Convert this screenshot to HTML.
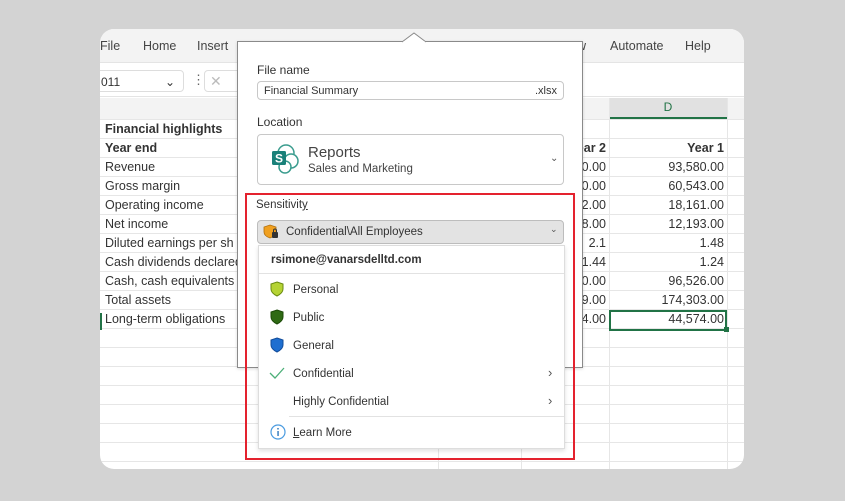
<!DOCTYPE html>
<html><head><meta charset="utf-8"><style>
*{margin:0;padding:0;box-sizing:border-box}
body{width:845px;height:501px;background:#d3d3d3;font-family:"Liberation Sans",sans-serif;position:relative;overflow:hidden;color:#333}
.a{position:absolute}
.card{left:100px;top:29px;width:644px;height:440px;background:#fff;border-radius:14px;overflow:hidden}
.rib{left:0;top:0;width:644px;height:34px;background:#f3f3f3;border-bottom:1px solid #e4e4e4;font-size:12.5px;color:#444}
.hl{height:1px;background:#e6e6e6;left:0;width:644px}
.vl{width:1px;background:#e6e6e6}
.cell{font-size:12.5px;color:#333;white-space:nowrap}
.r{text-align:right}
.b{font-weight:bold}
.t{font-size:12px;color:#333}
</style></head><body>
<div class="a card">
 <div class="a rib">
  <span class="a" style="left:0;top:10px">File</span>
  <span class="a" style="left:43px;top:10px">Home</span>
  <span class="a" style="left:97px;top:10px">Insert</span>
  <span class="a" style="left:477px;top:10px">w</span>
  <span class="a" style="left:510px;top:10px">Automate</span>
  <span class="a" style="left:585px;top:10px">Help</span>
 </div>
 <div class="a" style="left:0;top:35px;width:644px;height:33px;background:#fff;border-bottom:1px solid #e4e4e4"></div>
 <div class="a" style="left:-8px;top:41px;width:92px;height:22px;border:1px solid #ddd;border-radius:4px;font-size:12px;padding:4px 8px">011<span style="float:right">⌄</span></div>
 <span class="a" style="left:92px;top:43px;font-size:13px;color:#666">⋮</span>
 <div class="a" style="left:104px;top:41px;width:40px;height:22px;border:1px solid #ddd;border-radius:4px;color:#bbb;font-size:14px;padding:2px 5px">✕</div>
 <div class="a" style="left:0;top:69px;width:644px;height:21px;background:#f3f3f3"></div>
 <div class="a" style="left:509px;top:69px;width:118px;height:21px;background:#e1e1e1;border-bottom:2px solid #217346;text-align:center;color:#217346;font-size:12px;line-height:19px">D</div>
 <!-- grid -->
 <div class="a hl" style="top:90px"></div><div class="a hl" style="top:109px"></div><div class="a hl" style="top:128px"></div><div class="a hl" style="top:147px"></div><div class="a hl" style="top:166px"></div><div class="a hl" style="top:185px"></div><div class="a hl" style="top:204px"></div><div class="a hl" style="top:223px"></div><div class="a hl" style="top:242px"></div><div class="a hl" style="top:261px"></div><div class="a hl" style="top:280px"></div><div class="a hl" style="top:299px"></div><div class="a hl" style="top:318px"></div><div class="a hl" style="top:337px"></div><div class="a hl" style="top:356px"></div><div class="a hl" style="top:375px"></div><div class="a hl" style="top:394px"></div><div class="a hl" style="top:413px"></div><div class="a hl" style="top:432px"></div>
 <div class="a vl" style="left:338px;top:69px;height:371px"></div>
 <div class="a vl" style="left:421px;top:69px;height:371px"></div>
 <div class="a vl" style="left:509px;top:69px;height:371px"></div>
 <div class="a vl" style="left:627px;top:69px;height:371px"></div>
 <div class="a cell b" style="left:5px;top:93px">Financial highlights</div>
 <div class="a cell b" style="left:5px;top:112px">Year end</div>
 <div class="a cell" style="left:5px;top:131px">Revenue</div>
 <div class="a cell" style="left:5px;top:150px">Gross margin</div>
 <div class="a cell" style="left:5px;top:169px">Operating income</div>
 <div class="a cell" style="left:5px;top:188px">Net income</div>
 <div class="a cell" style="left:5px;top:207px">Diluted earnings per sh</div>
 <div class="a cell" style="left:5px;top:226px">Cash dividends declared</div>
 <div class="a cell" style="left:5px;top:245px">Cash, cash equivalents</div>
 <div class="a cell" style="left:5px;top:264px">Total assets</div>
 <div class="a cell" style="left:5px;top:283px">Long-term obligations</div>
 <div class="a" style="left:0;top:284px;width:2px;height:17px;background:#217346"></div>
 <div class="a cell r" style="left:440px;width:66px;top:112px;font-weight:bold">Year 2</div>
 <div class="a cell r" style="left:440px;width:66px;top:131px">93,580.00</div>
 <div class="a cell r" style="left:440px;width:66px;top:150px">60,540.00</div>
 <div class="a cell r" style="left:440px;width:66px;top:169px">18,162.00</div>
 <div class="a cell r" style="left:440px;width:66px;top:188px">12,198.00</div>
 <div class="a cell r" style="left:440px;width:66px;top:207px">2.1</div>
 <div class="a cell r" style="left:440px;width:66px;top:226px">1.44</div>
 <div class="a cell r" style="left:440px;width:66px;top:245px">96,520.00</div>
 <div class="a cell r" style="left:440px;width:66px;top:264px">174,309.00</div>
 <div class="a cell r" style="left:440px;width:66px;top:283px">44,574.00</div>
 <div class="a cell r b" style="left:509px;width:115px;top:112px">Year 1</div>
 <div class="a cell r" style="left:509px;width:115px;top:131px">93,580.00</div>
 <div class="a cell r" style="left:509px;width:115px;top:150px">60,543.00</div>
 <div class="a cell r" style="left:509px;width:115px;top:169px">18,161.00</div>
 <div class="a cell r" style="left:509px;width:115px;top:188px">12,193.00</div>
 <div class="a cell r" style="left:509px;width:115px;top:207px">1.48</div>
 <div class="a cell r" style="left:509px;width:115px;top:226px">1.24</div>
 <div class="a cell r" style="left:509px;width:115px;top:245px">96,526.00</div>
 <div class="a cell r" style="left:509px;width:115px;top:264px">174,303.00</div>
 <div class="a cell r" style="left:509px;width:115px;top:283px">44,574.00</div>
 <div class="a" style="left:509px;top:281px;width:118px;height:21px;border:2px solid #217346"></div>
 <div class="a" style="left:624px;top:298px;width:5px;height:5px;background:#217346"></div>
</div>

<!-- dialog -->
<div class="a" style="left:237px;top:41px;width:346px;height:327px;background:#fff;border:1px solid #8a8a8a;box-shadow:0 1px 3px rgba(0,0,0,.15)"></div>
<svg class="a" style="left:402px;top:32px" width="26" height="11"><path d="M0 10 L12 1 L24 10" fill="#fff" stroke="#8a8a8a"/><rect x="1" y="9.5" width="22" height="2" fill="#fff"/></svg>
<div class="a t" style="left:257px;top:63px">File name</div>
<div class="a" style="left:257px;top:81px;width:307px;height:19px;border:1px solid #c8c8c8;border-radius:4px;font-size:11px;padding:3px 6px;color:#333">Financial Summary<span style="float:right">.xlsx</span></div>
<div class="a t" style="left:257px;top:115px">Location</div>
<div class="a" style="left:257px;top:134px;width:307px;height:51px;border:1px solid #c8c8c8;border-radius:4px"></div>
<svg class="a" style="left:269px;top:143px" width="32" height="32" viewBox="0 0 32 32"><circle cx="17" cy="10" r="8" fill="#fff" stroke="#3a9c8e" stroke-width="1.5"/><circle cx="22" cy="18" r="7" fill="#fff" stroke="#3a9c8e" stroke-width="1.5"/><circle cx="16" cy="24" r="6" fill="#fff" stroke="#3a9c8e" stroke-width="1.5"/><rect x="3" y="8" width="14" height="14" rx="1.5" fill="#1a8079"/><text x="10" y="19.5" font-size="12" font-weight="bold" fill="#fff" text-anchor="middle" font-family="Liberation Sans">S</text></svg>
<div class="a" style="left:308px;top:144px;font-size:15px;color:#444">Reports</div>
<div class="a" style="left:308px;top:163px;font-size:11.5px;color:#444">Sales and Marketing</div>
<div class="a" style="left:550px;top:153px;font-size:10px;color:#555">⌄</div>
<div class="a" style="left:237px;top:176px;width:346px;height:1px"></div>

<!-- red box -->
<div class="a" style="left:245px;top:193px;width:330px;height:267px;border:2px solid #e4222e"></div>
<div class="a" style="left:256px;top:199px;font-size:11.5px;color:#333">Sensitivit<u>y</u></div>
<div class="a" style="left:257px;top:220px;width:307px;height:24px;background:#e3e3e3;border:1px solid #bdbdbd;border-radius:4px"></div>
<svg class="a" style="left:263px;top:224px" width="18" height="16" viewBox="0 0 18 16"><path d="M7 1 L13 3 V8 C13 11 10 13 7 14 C4 13 1 11 1 8 V3 Z" fill="#f0a020" stroke="#b07010" stroke-width=".8"/><rect x="9" y="8" width="6" height="6" rx="1" fill="#333"/><path d="M10.5 8 V6.5 a1.5 1.5 0 0 1 3 0 V8" fill="none" stroke="#333"/></svg>
<div class="a" style="left:286px;top:226px;font-size:11.5px;color:#333">Confidential\All Employees</div>
<div class="a" style="left:550px;top:224px;font-size:9px;color:#555">⌄</div>
<div class="a" style="left:258px;top:245px;width:307px;height:204px;background:#fff;border:1px solid #ddd;box-shadow:0 2px 4px rgba(0,0,0,.12)"></div>
<div class="a" style="left:271px;top:254px;font-size:11.5px;font-weight:bold;color:#333">rsimone@vanarsdelltd.com</div>
<div class="a" style="left:259px;top:273px;width:305px;height:1px;background:#e2e2e2"></div>
<svg class="a" style="left:269px;top:281px" width="16" height="16" viewBox="0 0 16 16"><path d="M8 1 L14 3 V8 C14 11.5 11 13.5 8 15 C5 13.5 2 11.5 2 8 V3 Z" fill="#b5d334" stroke="#6a8a10"/></svg>
<div class="a" style="left:293px;top:284px;font-size:11.5px">Personal</div>
<svg class="a" style="left:269px;top:309px" width="16" height="16" viewBox="0 0 16 16"><path d="M8 1 L14 3 V8 C14 11.5 11 13.5 8 15 C5 13.5 2 11.5 2 8 V3 Z" fill="#2f6a14" stroke="#1c4a08"/></svg>
<div class="a" style="left:293px;top:312px;font-size:11.5px">Public</div>
<svg class="a" style="left:269px;top:337px" width="16" height="16" viewBox="0 0 16 16"><path d="M8 1 L14 3 V8 C14 11.5 11 13.5 8 15 C5 13.5 2 11.5 2 8 V3 Z" fill="#1f6fd0" stroke="#124c9a"/></svg>
<div class="a" style="left:293px;top:340px;font-size:11.5px">General</div>
<svg class="a" style="left:269px;top:366px" width="16" height="14"><path d="M1 7 L6 12 L15 2" fill="none" stroke="#4caf78" stroke-width="1.3"/></svg>
<div class="a" style="left:293px;top:368px;font-size:11.5px">Confidential</div>
<div class="a" style="left:548px;top:365px;font-size:13px;color:#555">›</div>
<div class="a" style="left:293px;top:396px;font-size:11.5px">Highly Confidential</div>
<div class="a" style="left:548px;top:393px;font-size:13px;color:#555">›</div>
<div class="a" style="left:289px;top:416px;width:275px;height:1px;background:#e2e2e2"></div>
<svg class="a" style="left:270px;top:424px" width="16" height="16"><circle cx="8" cy="8" r="7" fill="#fff" stroke="#4a9be0" stroke-width="1.2"/><rect x="7.3" y="7" width="1.5" height="5" fill="#3a7fc0"/><circle cx="8" cy="4.8" r="0.9" fill="#3a7fc0"/></svg>
<div class="a" style="left:293px;top:427px;font-size:11.5px"><u>L</u>earn More</div>
</body></html>
